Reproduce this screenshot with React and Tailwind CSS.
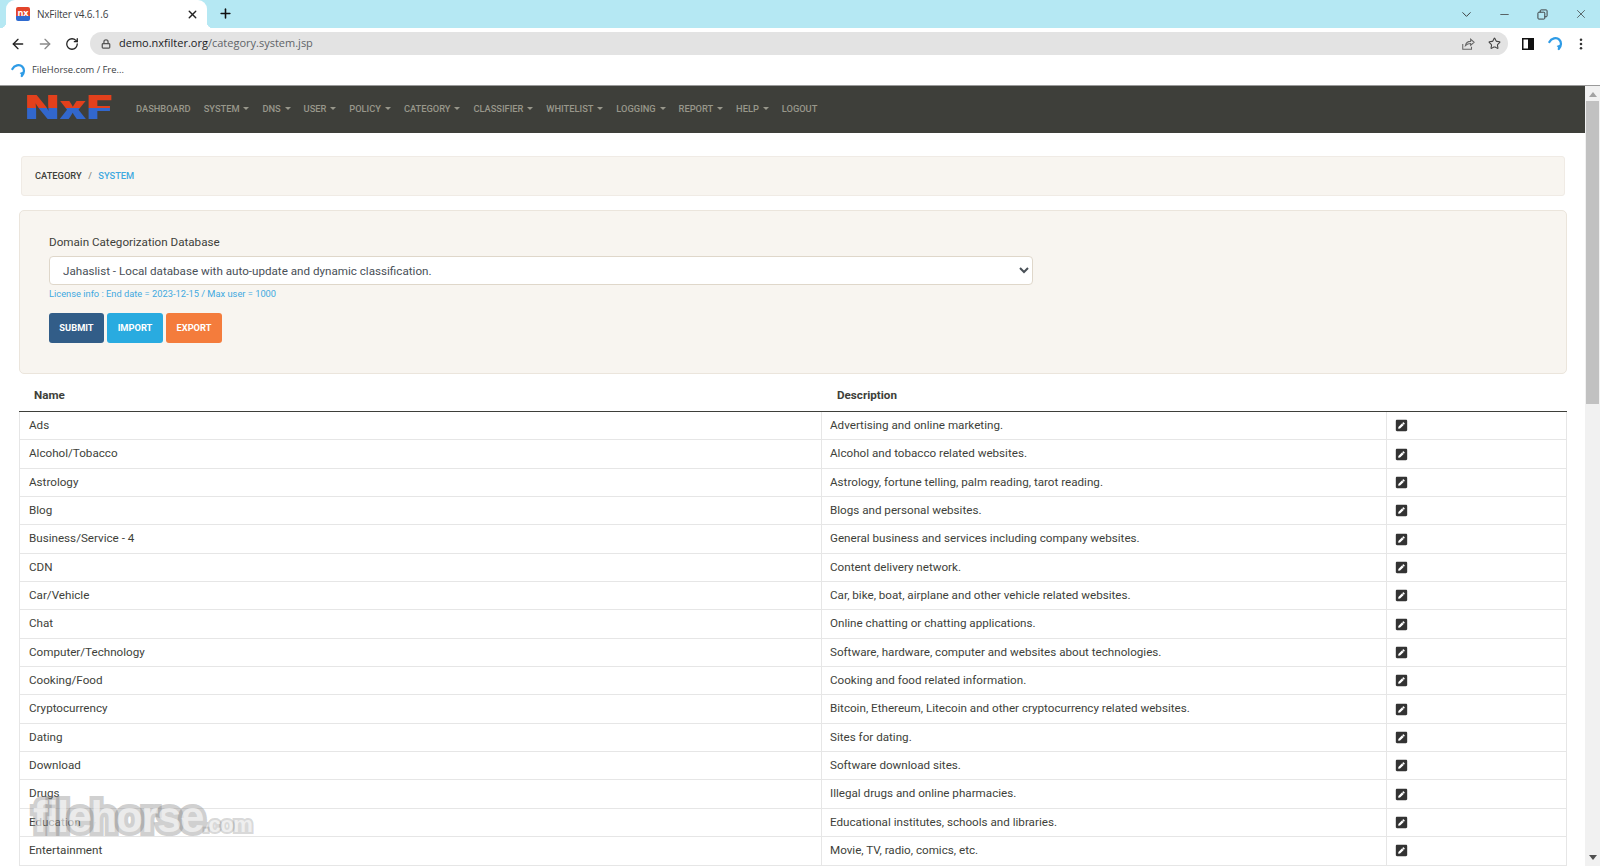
import React from 'react';
import { ArrowLeft, ArrowRight, RotateCw, Lock, Star, X, Plus, ChevronDown, Minus } from 'lucide-react';
import { FaPenSquare } from 'react-icons/fa';

const navItems = [
  { label: 'Dashboard' },
  { label: 'System', caret: true },
  { label: 'DNS', caret: true },
  { label: 'User', caret: true },
  { label: 'Policy', caret: true },
  { label: 'Category', caret: true },
  { label: 'Classifier', caret: true },
  { label: 'Whitelist', caret: true },
  { label: 'Logging', caret: true },
  { label: 'Report', caret: true },
  { label: 'Help', caret: true },
  { label: 'Logout' },
];

const categories = [
  ['Ads', 'Advertising and online marketing.'],
  ['Alcohol/Tobacco', 'Alcohol and tobacco related websites.'],
  ['Astrology', 'Astrology, fortune telling, palm reading, tarot reading.'],
  ['Blog', 'Blogs and personal websites.'],
  ['Business/Service - 4', 'General business and services including company websites.'],
  ['CDN', 'Content delivery network.'],
  ['Car/Vehicle', 'Car, bike, boat, airplane and other vehicle related websites.'],
  ['Chat', 'Online chatting or chatting applications.'],
  ['Computer/Technology', 'Software, hardware, computer and websites about technologies.'],
  ['Cooking/Food', 'Cooking and food related information.'],
  ['Cryptocurrency', 'Bitcoin, Ethereum, Litecoin and other cryptocurrency related websites.'],
  ['Dating', 'Sites for dating.'],
  ['Download', 'Software download sites.'],
  ['Drugs', 'Illegal drugs and online pharmacies.'],
  ['Education', 'Educational institutes, schools and libraries.'],
  ['Entertainment', 'Movie, TV, radio, comics, etc.'],
];

const FileHorseIcon = ({ className }) => (
  <svg viewBox="0 0 16 16" className={className} fill="none">
    <path d="M1.500 6.500C3.500 2.500 9 1 12 3.800c2.500 2.400 2.500 6.700-.5 10" stroke="#2e9be6" strokeWidth="2.400" strokeLinecap="round" />
    <path d="M11.500 15c-.3-1.800-.9-3.200-2.300-4.300l4-1.700z" fill="#2e9be6" />
  </svg>
);

const App = () => {
  return (
    <div className="h-[866px] w-[1600px] overflow-hidden bg-white font-['Roboto',sans-serif] relative">
      {/* browser chrome */}
      <div className="h-[28px] bg-[#b5e8f3] flex items-end font-['Open_Sans',sans-serif]">
        <div className="relative ml-[6px] h-[28px] w-[201px] bg-white rounded-t-[9px] flex items-center pl-[10px] pr-[8px]">
          <div className="absolute -left-[6px] bottom-0 size-[6px] bg-[radial-gradient(circle_at_0_0,#b5e8f3_6px,#ffffff_6.500px)]" />
          <div className="absolute -right-[6px] bottom-0 size-[6px] bg-[radial-gradient(circle_at_100%_0,#b5e8f3_6px,#ffffff_6.500px)]" />
          <div className="size-[14px] rounded-[2px] bg-[linear-gradient(#e2452b_65%,#2f6bd0_65%)] text-white text-[9px] leading-[11px] font-bold text-center overflow-hidden">nx</div>
          <span className="ml-[7px] text-[10px] text-[#3c4043] tracking-[-0.2px]">NxFilter v4.6.1.6</span>
          <X size={13} strokeWidth={2.5} className="ml-auto text-[#222]" />
        </div>
        <Plus size={15} strokeWidth={2.5} className="ml-[11px] mb-[7px] text-[#111]" />
        <div className="ml-auto flex items-center h-[28px] text-[#333]">
          <ChevronDown size={15} strokeWidth={1.5} className="mr-[24px]" />
          <Minus size={13} strokeWidth={1.5} className="mr-[26px] text-[#444]" />
          <svg viewBox="0 0 12 12" className="size-[11px] mr-[26px]" fill="none" stroke="#333" strokeWidth="1">
            <rect x="1" y="3.500" width="7.500" height="7.500" rx="1" />
            <path d="M3.500 3.500V2a1 1 0 0 1 1-1h5.500a1 1 0 0 1 1 1v5.500a1 1 0 0 1-1 1H8.500" />
          </svg>
          <X size={14} strokeWidth={1.2} className="mr-[12px]" />
        </div>
      </div>

      <div className="h-[29px] pt-[2px] flex items-center font-['Open_Sans',sans-serif]">
        <ArrowLeft size={16} strokeWidth={2} className="ml-[10px] text-[#222]" />
        <ArrowRight size={16} strokeWidth={2} className="ml-[11px] text-[#8a8a8a]" />
        <RotateCw size={14} strokeWidth={2.2} className="ml-[12px] text-[#222]" />
        <div className="ml-[11px] h-[23px] w-[1418px] rounded-full bg-[#e3e3e3] flex items-center pl-[11px] pr-[7px]">
          <Lock size={10} strokeWidth={3} className="text-[#555]" />
          <span className="ml-[8px] text-[11px] text-[#202124]">demo.nxfilter.org<span className="text-[#5f6368]">/category.system.jsp</span></span>
          <svg viewBox="0 0 16 16" className="ml-auto size-[14px]" fill="none" stroke="#666" strokeWidth="1.200">
            <path d="M2 8v6h10v-3" />
            <path d="M5 10c.5-3 3-5 6-5V2.500L15 6l-4 3.500V7.500c-2.500 0-4.500 1-6 2.500z" />
          </svg>
          <Star size={13} strokeWidth={2} className="ml-[13px] text-[#444]" />
        </div>
        <svg viewBox="0 0 12 12" className="ml-[14px] size-[12px]">
          <rect x="0.750" y="0.750" width="10.500" height="10.500" fill="none" stroke="#111" strokeWidth="1.500" />
          <rect x="6" y="0.750" width="5.250" height="10.500" fill="#111" />
        </svg>
        <FileHorseIcon className="ml-[14px] size-[15px]" />
        <svg viewBox="0 0 4 14" className="ml-[16px] h-[12px] w-[4px]" fill="#333">
          <circle cx="2" cy="2" r="1.500" />
          <circle cx="2" cy="7" r="1.500" />
          <circle cx="2" cy="12" r="1.500" />
        </svg>
      </div>

      <div className="h-[29px] pb-[1px] flex items-center pl-[11px] font-['Open_Sans',sans-serif] border-b border-[#9a9a9a]">
        <FileHorseIcon className="size-[15px]" />
        <span className="ml-[6px] text-[9.400px] text-[#3c4043]">FileHorse.com / Fre...</span>
      </div>

      {/* page + scrollbar */}
      <div className="flex h-[780px]">
        <div className="w-[1585px] overflow-hidden">
          <nav className="h-[47px] pb-[2px] bg-[#3e3f3a] flex items-center pl-[25px]">
            <div className="w-[88px] mt-[4px]">
              <span className="inline-block origin-left scale-x-[1.35] font-['Inter',sans-serif] font-black text-[33px] leading-[24px] bg-[linear-gradient(#e2401c_56%,#3267cc_56%)] bg-clip-text text-transparent">NxF</span>
            </div>
            <ul className="ml-[23px] flex items-center gap-[13px] text-[9.300px] font-medium uppercase text-[#98978b]">
              {navItems.map((item) => (
                <li key={item.label} className="flex items-center">
                  {item.label}
                  {item.caret && <span className="ml-[3.870px] border-x-[3px] border-t-[3px] border-x-transparent border-t-[#98978b]" />}
                </li>
              ))}
            </ul>
          </nav>

          <div className="pl-[19px] pr-[18px]">
            <div className="mx-[2px] mt-[23px] h-[40px] bg-[#f8f5f0] border border-[#f0ebe5] rounded-[3px] flex items-center pl-[13px] text-[9.300px] font-medium uppercase">
              <span className="text-[#3e3f3a]">Category</span>
              <span className="mx-[6.500px] text-[#8e8c84]">/</span>
              <span className="text-[#3fa9e0]">System</span>
            </div>

            <div className="mt-[14px] h-[164px] bg-[#f8f5f0] border border-[#ebe5dc] rounded-[5px] pl-[29px] pt-[24px]">
              <label className="block text-[11.650px] leading-[14px] text-[#3e3f3a]">Domain Categorization Database</label>
              <select
                defaultValue="jahaslist"
                className="mt-[7px] block h-[29px] w-[984px] bg-white border border-[#dfd7ca] rounded-[4px] pl-[9px] text-[11.650px] text-[#495057]"
              >
                <option value="jahaslist">Jahaslist - Local database with auto-update and dynamic classification.</option>
              </select>
              <p className="mt-[3px] text-[9.300px] leading-[12px] text-[#3fa9e0]">License info : End date = 2023-12-15 / Max user = 1000</p>
              <div className="mt-[13px] flex gap-[3px] text-[9.300px] font-bold text-white">
                <button className="h-[30px] w-[55px] rounded-[3px] bg-[#325d88] uppercase">Submit</button>
                <button className="h-[30px] w-[56px] rounded-[3px] bg-[#29abe0] uppercase">Import</button>
                <button className="h-[30px] w-[56px] rounded-[3px] bg-[#f47c3c] uppercase">Export</button>
              </div>
            </div>

            <div className="grid grid-cols-[801px_566px_181px] h-[38px] pt-[6px] items-center border-b border-[#3e3f3a] text-[11.650px] font-bold text-[#3e3f3a]">
              <div className="pl-[15px]">Name</div>
              <div className="pl-[17px]">Description</div>
              <div />
            </div>
            {categories.map(([name, description]) => (
              <div key={name} className="grid grid-cols-[801px_565px_180px] h-[28.350px] border-b border-[#e6e6e6] border-x text-[11.650px] text-[#3e3f3a]">
                <div className="flex items-center pl-[9px]">{name}</div>
                <div className="flex items-center pl-[8px] border-l border-[#e6e6e6]">{description}</div>
                <div className="flex items-center pl-[8px] border-l border-[#e6e6e6]">
                  <FaPenSquare size={13} className="text-[#333]" />
                </div>
              </div>
            ))}
          </div>
        </div>

        <div className="w-[15px] bg-[#f1f1f1] flex flex-col items-center">
          <span className="mt-[6px] border-x-[4px] border-b-[5px] border-x-transparent border-b-[#a3a3a3]" />
          <div className="mt-[4px] h-[303px] w-[13px] bg-[#c1c1c1]" />
          <span className="mt-auto mb-[6px] border-x-[4px] border-t-[5px] border-x-transparent border-t-[#505050]" />
        </div>
      </div>

      {/* watermark */}
      <div className="absolute left-[33px] bottom-[30px] flex items-baseline font-['Liberation_Sans',sans-serif] font-bold text-white/60 pointer-events-none">
        <span className="text-[44px] leading-[36px] tracking-[-1.500px] [-webkit-text-stroke:8px_rgba(120,120,120,0.35)] [paint-order:stroke_fill]">filehorse</span>
        <span className="text-[22px] leading-[22px] tracking-[-0.5px] [-webkit-text-stroke:4px_rgba(120,120,120,0.3)] [paint-order:stroke_fill]">.com</span>
      </div>
    </div>
  );
};

export default App;
